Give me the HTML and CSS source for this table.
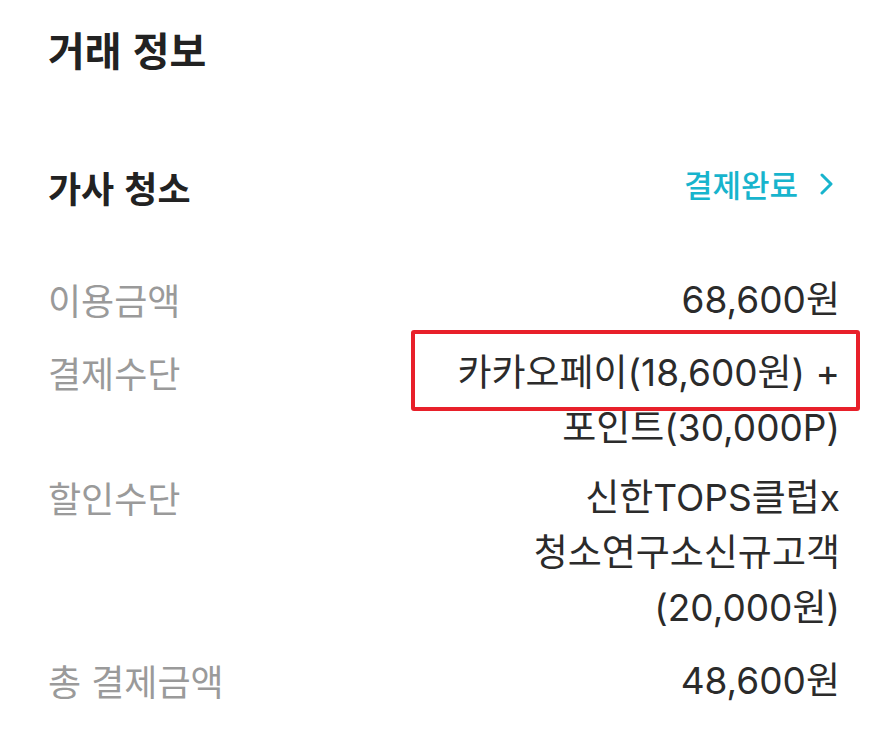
FILE: index.html
```html
<!DOCTYPE html>
<html lang="ko">
<head>
<meta charset="utf-8">
<link rel="stylesheet" href="styles.css">
</head>
<body>
<main class="page">
  <h1 class="title">거래 정보</h1>
  <div class="section-head">
    <h2 class="section-title">가사 청소</h2>
    <a class="status-link" href="#">결제완료<svg class="chev" width="14" height="22" viewBox="0 0 14 22"><polyline points="2,2 11,11 2,20" fill="none" stroke="currentColor" stroke-width="3" stroke-linecap="round" stroke-linejoin="round"/></svg></a>
  </div>
  <dl class="rows">
    <div class="row">
      <dt class="label">이용금액</dt>
      <dd class="value">68,600원</dd>
    </div>
    <div class="row row-pay">
      <dt class="label">결제수단</dt>
      <dd class="value"><span class="line">카카오페이(18,600원) +</span><span class="line">포인트(30,000P)</span></dd>
      <span class="mark"></span>
    </div>
    <div class="row">
      <dt class="label">할인수단</dt>
      <dd class="value"><span class="line">신한TOPS클럽x</span><span class="line">청소연구소신규고객</span><span class="line">(20,000원)</span></dd>
    </div>
    <div class="row">
      <dt class="label">총 결제금액</dt>
      <dd class="value">48,600원</dd>
    </div>
  </dl>
</main>
</body>
</html>
```

FILE: styles.css
```css
html, body {
  margin: 0;
  padding: 0;
  background: #ffffff;
}
body {
  font-family: Inter, "Noto Sans CJK KR", sans-serif;
  color: #2b2b2b;
}
.page {
  padding: 24px 40px 0 48px;
}
.title {
  margin: 0;
  font-family: "Noto Sans CJK KR", sans-serif;
  font-size: 40px;
  font-weight: 700;
  line-height: 50px;
  color: #222222;
}
.section-head {
  margin-top: 88px;
  display: flex;
  justify-content: space-between;
  align-items: center;
  height: 50px;
}
.section-title {
  margin: 0;
  font-family: "Noto Sans CJK KR", sans-serif;
  font-size: 36px;
  font-weight: 700;
  line-height: 50px;
  color: #222222;
}
.status-link {
  display: flex;
  align-items: center;
  gap: 22px;
  font-family: "Noto Sans CJK KR", sans-serif;
  font-size: 31px;
  font-weight: 500;
  line-height: 40px;
  color: #17b4cd;
  text-decoration: none;
  padding: 0 6px 6px 0;
}
.chev {
  display: block;
}
.rows {
  margin: 60px 0 0;
  display: flex;
  flex-direction: column;
  gap: 18px;
}
.row {
  display: flex;
  justify-content: space-between;
  align-items: flex-start;
}
.row-pay {
  position: relative;
  margin-bottom: -3px;
}
.label {
  margin: 0;
  font-family: "Noto Sans CJK KR", sans-serif;
  font-size: 36px;
  line-height: 55px;
  color: #9a9a9a;
  white-space: nowrap;
}
.value {
  margin: 0;
  font-size: 37px;
  line-height: 55px;
  color: #2b2b2b;
  text-align: right;
  display: flex;
  flex-direction: column;
  align-items: flex-end;
  white-space: nowrap;
}
.mark {
  position: absolute;
  right: -20px;
  top: -15px;
  width: 449px;
  height: 81px;
  box-sizing: border-box;
  border: 4px solid #e8202a;
  border-radius: 3px;
}
```
